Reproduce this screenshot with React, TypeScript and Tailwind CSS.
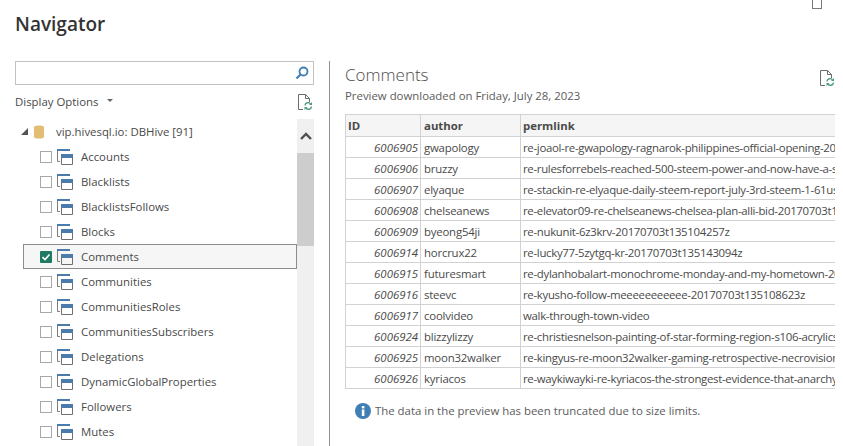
const TABLES = [
  'Accounts',
  'Blacklists',
  'BlacklistsFollows',
  'Blocks',
  'Comments',
  'Communities',
  'CommunitiesRoles',
  'CommunitiesSubscribers',
  'Delegations',
  'DynamicGlobalProperties',
  'Followers',
  'Mutes',
]

const ROWS = [
  ['6006905', 'gwapology', 're-joaol-re-gwapology-ragnarok-philippines-official-opening-20170703t135'],
  ['6006906', 'bruzzy', 're-rulesforrebels-reached-500-steem-power-and-now-have-a-slight-20170703'],
  ['6006907', 'elyaque', 're-stackin-re-elyaque-daily-steem-report-july-3rd-steem-1-61usd-20170703'],
  ['6006908', 'chelseanews', 're-elevator09-re-chelseanews-chelsea-plan-alli-bid-20170703t135104257z'],
  ['6006909', 'byeong54ji', 're-nukunit-6z3krv-20170703t135104257z'],
  ['6006914', 'horcrux22', 're-lucky77-5zytgq-kr-20170703t135143094z'],
  ['6006915', 'futuresmart', 're-dylanhobalart-monochrome-monday-and-my-hometown-20170703t135108623z'],
  ['6006916', 'steevc', 're-kyusho-follow-meeeeeeeeeee-20170703t135108623z'],
  ['6006917', 'coolvideo', 'walk-through-town-video'],
  ['6006924', 'blizzylizzy', 're-christiesnelson-painting-of-star-forming-region-s106-acrylics-on-canvas'],
  ['6006925', 'moon32walker', 're-kingyus-re-moon32walker-gaming-retrospective-necrovision-lost-company'],
  ['6006926', 'kyriacos', 're-waykiwayki-re-kyriacos-the-strongest-evidence-that-anarchy-is-possible'],
]

function RefreshDocIcon() {
  return (
    <svg width="15" height="17" viewBox="0 0 15 17" fill="none">
      <path d="M.5.5H7.5L11.5 4.5V8M7.5.5V4.5H11.5M.5.5V15.5H5" stroke="#6b6b6b" />
      <path d="M7 11.5A3 3 0 0 1 12.5 10M13.5 12.5A3 3 0 0 1 8 14" stroke="#4f9a7c" strokeWidth="1.4" />
      <path d="M11 11H14V8ZM9.5 13H6.5V16Z" fill="#4f9a7c" />
    </svg>
  )
}

function TableIcon() {
  return (
    <svg width="16" height="16" viewBox="0 0 16 16" fill="none" className="shrink-0">
      <path d="M0 0H13V2H0Z" fill="#4b7bab" />
      <path d="M.5 2V12.5H3" stroke="#7d7d7d" />
      <path d="M4 5H16V9H4Z" fill="#4b7bab" />
      <path d="M4.5 9V15.5H15.5V9" stroke="#6f6f6f" />
    </svg>
  )
}

function TableRow({ name, checked }: { name: string; checked: boolean }) {
  return (
    <div
      className={`flex h-[25px] items-center border pl-[16px] ${
        checked ? 'border-[#8c8c8c] bg-[#f6f6f6]' : 'border-transparent'
      }`}
    >
      {checked ? (
        <span className="flex h-[12px] w-[12px] items-center justify-center rounded-[1px] bg-[#1f7a63]">
          <svg width="10" height="10" viewBox="0 0 10 10" fill="none">
            <path d="M1.5 5.2L4 7.5L8.5 2.5" stroke="#fff" strokeWidth="1.6" />
          </svg>
        </span>
      ) : (
        <span className="h-[12px] w-[12px] border border-[#a8a8a8] bg-white" />
      )}
      <span className="ml-[5px]">
        <TableIcon />
      </span>
      <span className="ml-[8px] text-[11.4px] text-[#4a4a4a]">{name}</span>
    </div>
  )
}

export default function App() {
  return (
    <div className="relative h-[446px] w-[843px] overflow-hidden bg-white font-['Open_Sans','Noto_Sans',sans-serif]">
      {/* corner of the window behind */}
      <div className="absolute right-[21px] top-0 h-[9px] w-[10px] border border-t-0 border-[#7a7a7a]" />

      <div className="flex h-[61px] items-start pl-[15px] pt-[10px]">
        <h1 className="text-[19px] font-semibold leading-[28px] text-[#333333]">Navigator</h1>
      </div>

      <div className="flex h-[385px]">
        {/* left pane */}
        <div className="flex w-[329px] flex-col pl-[15px] pr-[15px]">
          <div className="flex h-[24px] shrink-0 items-center justify-end border border-[#c2c2c2] pr-[4px]">
            <svg width="14" height="14" viewBox="0 0 14 14" fill="none">
              <circle cx="8.5" cy="5.5" r="4" stroke="#3f7fb5" strokeWidth="1.8" />
              <path d="M5.5 8.5L1.5 12.5" stroke="#3f7fb5" strokeWidth="2.2" />
            </svg>
          </div>
          <div className="flex h-[34px] shrink-0 items-center justify-between pr-[1px]">
            <div className="flex items-center text-[11.4px] text-[#4a4a4a]">
              Display Options
              <svg width="6" height="4" viewBox="0 0 6 4" className="ml-[9px] mb-[2px]">
                <path d="M0 0H6L3 3Z" fill="#666666" />
              </svg>
            </div>
            <RefreshDocIcon />
          </div>
          <div className="flex min-h-0 flex-1 overflow-hidden">
            <div className="min-w-0 flex-1 pl-[8px]">
              <div className="-ml-[2px] flex h-[25px] items-center">
                <svg width="7" height="7" viewBox="0 0 7 7">
                  <path d="M7 0V7H0Z" fill="#555555" />
                </svg>
                <svg width="10" height="14" viewBox="0 0 10 14" className="ml-[6px]">
                  <path d="M0 2C0 0 10 0 10 2V12C10 14 0 14 0 12Z" fill="#e3bd74" />
                </svg>
                <span className="ml-[12px] text-[11.4px] text-[#4a4a4a]">vip.hivesql.io: DBHive [91]</span>
              </div>
              {TABLES.map((name) => (
                <TableRow key={name} name={name} checked={name === 'Comments'} />
              ))}
            </div>
            {/* scrollbar */}
            <div className="flex w-[17px] shrink-0 flex-col bg-[#f0f0f0]">
              <div className="flex h-[34px] items-center justify-center">
                <svg width="12" height="8" viewBox="0 0 12 8" fill="none">
                  <path d="M1 7L6 2L11 7" stroke="#505050" strokeWidth="2.4" />
                </svg>
              </div>
              <div className="h-[93px] bg-[#cdcdcd]" />
            </div>
          </div>
        </div>

        {/* right pane */}
        <div className="flex min-w-0 flex-1 flex-col border-l border-[#8f8f8f] pl-[15px] pr-[8px] pt-[1px]">
          <div className="flex shrink-0 items-start justify-between">
            <div>
              <h2 className="text-[17px] font-light leading-[25px] text-[#4d4d4d]">Comments</h2>
              <p className="text-[11.4px] leading-[17px] text-[#5c5c5c]">Preview downloaded on Friday, July 28, 2023</p>
            </div>
            <span className="mt-[8px]">
              <RefreshDocIcon />
            </span>
          </div>
          <div className="mt-[10px] w-[490px] shrink-0 overflow-hidden">
            <table className="w-[560px] table-fixed border-collapse text-[11.4px] text-[#4a4a4a]">
              <colgroup>
                <col className="w-[75px]" />
                <col className="w-[100px]" />
                <col />
              </colgroup>
              <thead>
                <tr className="h-[22px] bg-[#f5f5f5] font-semibold">
                  <th className="border border-[#d2d2d2] px-[2px] text-left">ID</th>
                  <th className="border border-[#d2d2d2] px-[3px] text-left">author</th>
                  <th className="border border-[#d2d2d2] px-[2px] text-left">permlink</th>
                </tr>
              </thead>
              <tbody>
                {ROWS.map(([id, author, permlink]) => (
                  <tr key={id} className="h-[21px]">
                    <td className="border border-[#d2d2d2] px-[2px] pt-[2px] text-right italic">{id}</td>
                    <td className="border border-[#d2d2d2] px-[3px] pt-[2px] tracking-[-0.2px]">{author}</td>
                    <td className="overflow-hidden whitespace-nowrap border border-[#d2d2d2] px-[2px] pt-[2px] tracking-[-0.3px]">
                      {permlink}
                    </td>
                  </tr>
                ))}
              </tbody>
            </table>
          </div>
          <div className="mt-[13px] flex items-center pl-[10px] text-[11.4px] text-[#5c5c5c]">
            <svg width="16" height="16" viewBox="0 0 16 16" className="shrink-0">
              <circle cx="8" cy="8" r="8" fill="#3f7fb5" />
              <rect x="6.8" y="6.5" width="2.6" height="6.5" fill="#fff" />
              <rect x="6.8" y="3" width="2.6" height="2.4" fill="#fff" />
            </svg>
            <span className="ml-[4px]">The data in the preview has been truncated due to size limits.</span>
          </div>
        </div>
      </div>
    </div>
  )
}
